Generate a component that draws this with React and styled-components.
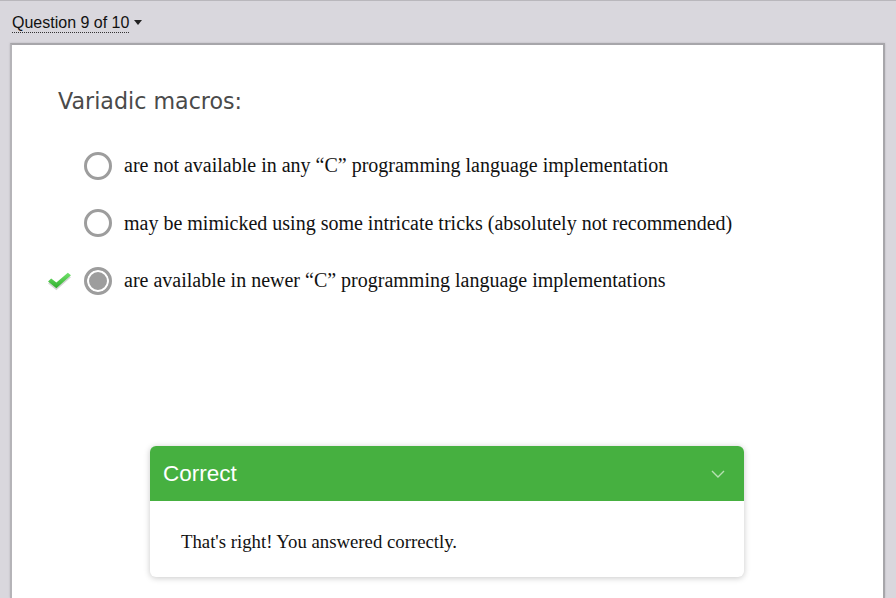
import React from 'react'
import styled, { createGlobalStyle } from 'styled-components'

const GlobalStyle = createGlobalStyle`
    html, body {
        margin: 0;
        padding: 0;
        background: #d9d7dd;
        height: 100%;
        overflow: hidden;
    }
    #root {
        height: 100%;
    }
`

const options = [
    { text: 'are not available in any \u201CC\u201D programming language implementation' },
    { text: 'may be mimicked using some intricate tricks (absolutely not recommended)' },
    { text: 'are available in newer \u201CC\u201D programming language implementations', selected: true, correct: true },
]

function Check() {
    return (
        <CheckMark viewBox="0 0 24 20" width="25" height="21">
            <defs>
                <linearGradient id="chk" x1="0" y1="0" x2="0" y2="1">
                    <stop offset="0" stopColor="#72e26c" />
                    <stop offset="1" stopColor="#2fae2c" />
                </linearGradient>
            </defs>
            <path d="M1 10 L9 16.5 L23 4 L20 1.5 L9 11 L4 7 Z" fill="#d4d4d4" transform="translate(0 2)" />
            <path d="M1 10 L9 16.5 L23 4 L20 1.5 L9 11 L4 7 Z" fill="url(#chk)" />
        </CheckMark>
    )
}

export default function App() {
    return (
        <Page>
            <GlobalStyle />
            <TopBar>
                <QuestionSelect>
                    <span>Question 9 of 10</span>
                    <Caret />
                </QuestionSelect>
            </TopBar>
            <Panel>
                <Title>Variadic macros:</Title>
                <OptionList>
                    {options.map((o, i) => (
                        <Option key={i}>
                            <Marker>{o.correct && <Check />}</Marker>
                            <Radio selected={o.selected} />
                            <OptionText>{o.text}</OptionText>
                        </Option>
                    ))}
                </OptionList>
                <Feedback>
                    <FeedbackHeader>
                        <span>Correct</span>
                        <Chevron viewBox="0 0 14 8" width="14" height="8">
                            <path d="M1 1 L7 7 L13 1" fill="none" stroke="#b6e0b2" strokeWidth="1.4" />
                        </Chevron>
                    </FeedbackHeader>
                    <FeedbackBody>That's right! You answered correctly.</FeedbackBody>
                </Feedback>
            </Panel>
        </Page>
    )
}

const Page = styled.div`
    height: 100%;
    display: flex;
    flex-direction: column;
    border-top: 1px solid #b9b7bc;
    box-sizing: border-box;
`

const TopBar = styled.div`
    height: 42px;
    padding-left: 12px;
    display: flex;
    align-items: center;
`

const QuestionSelect = styled.div`
    display: flex;
    align-items: center;
    margin-top: 2px;
    font-family: "Liberation Sans", Arial, sans-serif;
    font-size: 16px;
    color: #111;
    cursor: pointer;
    span {
        border-bottom: 1px dotted #333;
        line-height: 18px;
    }
`

const Caret = styled.i`
    width: 0;
    height: 0;
    margin-left: 5px;
    margin-top: -2px;
    border-left: 4.5px solid transparent;
    border-right: 4.5px solid transparent;
    border-top: 5px solid #222;
`

const Panel = styled.div`
    flex: 1;
    margin: 0 11px 0 10px;
    background: #fff;
    border-top: 2px solid #a7a6aa;
    border-left: 2px solid #b5b4b8;
    border-right: 2px solid #a7a6aa;
    box-shadow: 0 0 2px rgba(0, 0, 0, 0.15);
    padding: 43px 0 0 46px;
`

const Title = styled.h1`
    margin: 0;
    font-family: "DejaVu Sans", Verdana, sans-serif;
    font-weight: normal;
    font-size: 22.2px;
    color: #4a4a4a;
    line-height: 26px;
`

const OptionList = styled.div`
    display: flex;
    flex-direction: column;
    gap: 28.5px;
    margin-top: 37px;
    margin-left: -11px;
`

const Option = styled.div`
    display: flex;
    align-items: center;
    height: 29px;
`

const Marker = styled.div`
    width: 37px;
    display: flex;
    align-items: center;
`

const CheckMark = styled.svg`
    display: block;
    margin-top: 1px;
`

const Radio = styled.div`
    width: 28px;
    height: 28px;
    box-sizing: border-box;
    border-radius: 50%;
    border: 3px solid #9d9d9d;
    background: ${p => (p.selected ? '#9d9d9d' : '#fff')};
    box-shadow: ${p => (p.selected ? 'inset 0 0 0 2px #fff' : 'none')};
    flex-shrink: 0;
`

const OptionText = styled.span`
    margin-left: 12px;
    font-family: "Liberation Serif", "Times New Roman", serif;
    font-size: 20px;
    color: #111;
`

const Feedback = styled.div`
    width: 594px;
    margin: 151px 0 0 92px;
    border-radius: 6px;
    overflow: hidden;
    background: #fff;
    box-shadow: 0 1px 6px rgba(0, 0, 0, 0.22);
`

const FeedbackHeader = styled.div`
    height: 55px;
    background: #46b040;
    display: flex;
    align-items: center;
    justify-content: space-between;
    padding: 0 19px 0 13px;
    font-family: "Liberation Sans", Arial, sans-serif;
    font-size: 22.5px;
    color: #fff;
`

const Chevron = styled.svg`
    display: block;
`

const FeedbackBody = styled.div`
    height: 76px;
    box-sizing: border-box;
    padding: 30px 0 0 31px;
    font-family: "Liberation Serif", "Times New Roman", serif;
    font-size: 18.75px;
    color: #111;
`
